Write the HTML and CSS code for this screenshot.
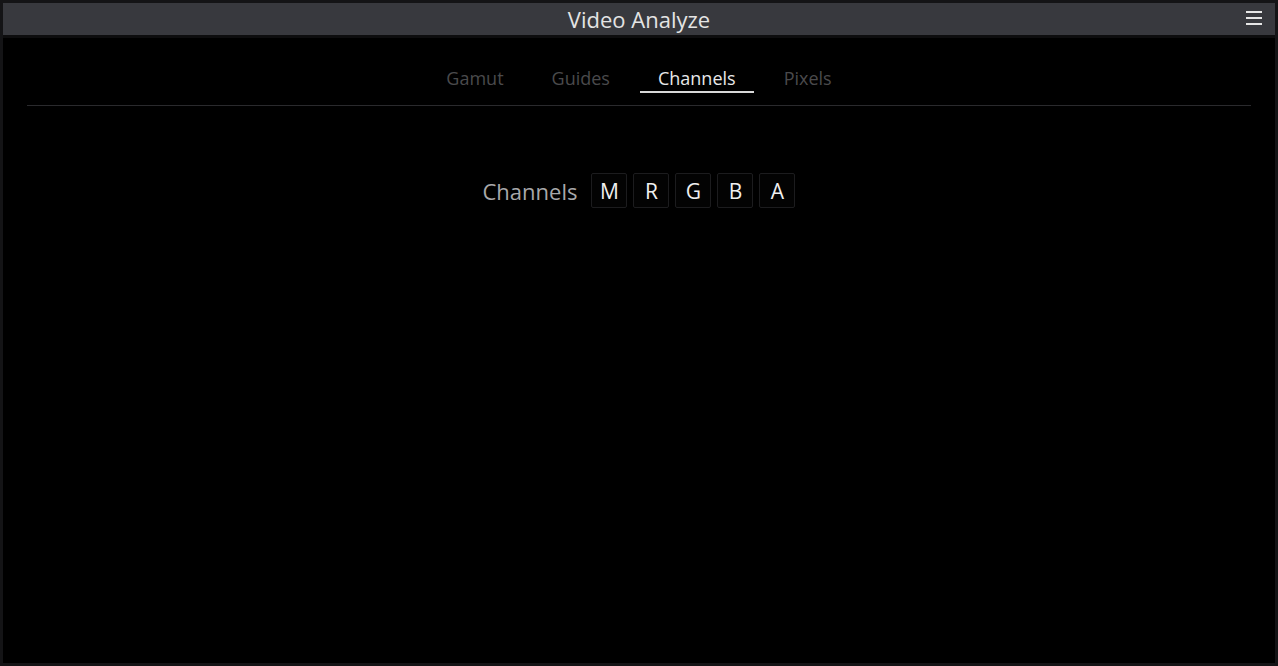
FILE: index.html
```html
<!DOCTYPE html>
<html lang="en">
<head>
  <meta charset="UTF-8">
  <title>Video Analyze</title>
  <link rel="stylesheet" href="styles.css">
</head>
<body>
  <div id="okno">
    <div id="naglowek">
      <span class="tytul">Video Analyze</span>
      <span class="menu">
        <svg width="16" height="14" viewBox="0 0 16 14">
          <rect x="0" y="0" width="16" height="2" fill="#e6e6e6"/>
          <rect x="0" y="6" width="16" height="2" fill="#e6e6e6"/>
          <rect x="0" y="12" width="16" height="2" fill="#e6e6e6"/>
        </svg>
      </span>
    </div>
    <div class="zakladki">
      <span class="tab">Gamut</span>
      <span class="tab">Guides</span>
      <span class="tab aktywna">Channels</span>
      <span class="tab">Pixels</span>
    </div>
    <div class="kanaly">
      <span class="etykieta">Channels</span>
      <span class="kanal">M</span>
      <span class="kanal">R</span>
      <span class="kanal">G</span>
      <span class="kanal">B</span>
      <span class="kanal">A</span>
    </div>
  </div>
</body>
</html>
```
FILE: styles.css
```css
html, body {
  margin: 0;
  padding: 0;
  background-color: #000;
  font-family: 'Open Sans', 'Noto Sans', sans-serif;
}

#okno {
  width: 1278px;
  height: 666px;
  box-sizing: border-box;
  border: 3px solid #141416;
  background-color: #000;
}

#naglowek {
  height: 32px;
  background-color: #38393e;
  border-bottom: 3px solid #0d0d0e;
  display: flex;
  align-items: center;
  justify-content: center;
  position: relative;
}

.tytul {
  color: #e4e4e4;
  font-size: 22px;
  line-height: 32px;
}

.menu {
  position: absolute;
  right: 13px;
  top: 8px;
  line-height: 0;
}

.zakladki {
  margin: 0 24px;
  padding-top: 27px;
  height: 68px;
  box-sizing: border-box;
  border-bottom: 1px solid #2a2a2d;
  display: flex;
  justify-content: center;
  gap: 12px;
}

.tab {
  padding: 0 18px;
  height: 28px;
  line-height: 26px;
  font-size: 18px;
  color: #4a4a4c;
  box-sizing: border-box;
}

.tab.aktywna {
  color: #e8e8e8;
  border-bottom: 2px solid #d8d8d8;
}

.kanaly {
  display: flex;
  justify-content: center;
  align-items: center;
  margin-top: 67px;
  gap: 6px;
}

.etykieta {
  color: #a8a8aa;
  font-size: 22px;
  margin-right: 8px;
}

.kanal {
  width: 36px;
  height: 35px;
  box-sizing: border-box;
  border: 1px solid #1c1c1e;
  border-radius: 2px;
  background-color: #030303;
  color: #f0f0f0;
  font-size: 21px;
  display: flex;
  align-items: center;
  justify-content: center;
}
```
